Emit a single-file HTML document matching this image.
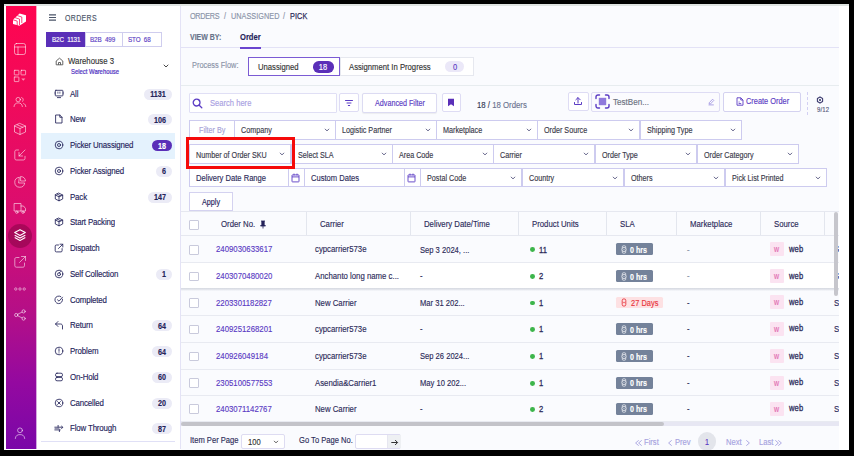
<!DOCTYPE html>
<html><head><meta charset="utf-8"><style>
html,body{margin:0;padding:0;}
body{width:854px;height:456px;overflow:hidden;background:#000;position:relative;font-family:"Liberation Sans", sans-serif;}
.t{position:absolute;white-space:nowrap;line-height:1;transform-origin:0 0;-webkit-text-stroke:0.15px currentColor;}
.r{position:absolute;box-sizing:border-box;}
.badge{border-radius:6px;font-size:7.6px;font-weight:700;text-align:center;line-height:11px;font-family:"Liberation Sans", sans-serif;}
</style></head><body>
<div class="r" style="left:4.00px;top:4.00px;width:845.00px;height:446.00px;background:#ffffff"></div>
<div class="r" style="left:4.00px;top:4.00px;width:845.00px;height:1.50px;background:#dfe4e2"></div>
<div class="r" style="left:6.00px;top:6.00px;width:30.00px;height:442.50px;background:linear-gradient(180deg,#ff0550 0%,#f20a5a 20%,#dc0d6e 45%,#b30f88 70%,#9409a0 85%,#7a07a8 100%)"></div>
<svg class="r" style="left:10.00px;top:10.00px" width="20" height="20" viewBox="0 0 20 20"><polygon points="3,9.8 9.6,3.4 16.0,5.3 16.0,11.6 9.3,15.8 3,13.9" fill="#fff"/><path d="M2.70 9.70 L7.20 11.10 L7.20 17.10" fill="none" stroke="#ff0552" stroke-width="0.75"/><path d="M5.00 7.65 L9.50 9.05 L9.50 15.05" fill="none" stroke="#ff0552" stroke-width="0.75"/><path d="M7.30 5.60 L11.80 7.00 L11.80 13.00" fill="none" stroke="#ff0552" stroke-width="0.75"/></svg>
<svg class="r" style="left:13.00px;top:42.00px" width="14" height="14" viewBox="0 0 14 14"><g fill="none" stroke="rgba(255,255,255,0.55)" stroke-width="1" stroke-linecap="round" stroke-linejoin="round"><rect x="1.5" y="1.5" width="11" height="11" rx="2"/><path d="M1.5 5 H12.5 M5 5 V12.5"/></g></svg>
<svg class="r" style="left:13.00px;top:68.50px" width="14" height="14" viewBox="0 0 14 14"><g fill="none" stroke="rgba(255,255,255,0.55)" stroke-width="1" stroke-linecap="round" stroke-linejoin="round"><rect x="1.3" y="1.3" width="4.6" height="4.6" rx="0.5"/><rect x="8" y="1.3" width="4.6" height="4.6" rx="0.5"/><rect x="1.3" y="8" width="4.6" height="4.6" rx="0.5"/></g><path d="M8.3 9.6 L12.3 9.6 L10.3 11.8 Z" fill="rgba(255,255,255,0.55)"/></svg>
<svg class="r" style="left:13.00px;top:95.00px" width="14" height="14" viewBox="0 0 14 14"><g fill="none" stroke="rgba(255,255,255,0.55)" stroke-width="1" stroke-linecap="round" stroke-linejoin="round"><circle cx="5.2" cy="4.6" r="2.2"/><path d="M1 11.6 C1.2 9 3 7.9 5.2 7.9 C7.4 7.9 9.2 9 9.4 11.6"/><path d="M8.6 2.5 C10.3 2.7 11 5.5 9.3 6.6 M10.6 8.4 C12 9 12.7 10.2 12.8 11.6"/></g></svg>
<svg class="r" style="left:13.00px;top:121.50px" width="14" height="14" viewBox="0 0 14 14"><g fill="none" stroke="rgba(255,255,255,0.55)" stroke-width="1" stroke-linecap="round" stroke-linejoin="round"><path d="M7 1.5 L12.5 4 L12.5 10 L7 12.5 L1.5 10 L1.5 4 Z M1.5 4 L7 6.5 L12.5 4 M7 6.5 V12.5 M4.2 2.8 L9.8 5.3"/></g></svg>
<svg class="r" style="left:13.00px;top:148.00px" width="14" height="14" viewBox="0 0 14 14"><g fill="none" stroke="rgba(255,255,255,0.55)" stroke-width="1" stroke-linecap="round" stroke-linejoin="round"><path d="M5.5 2 H3.5 C2.4 2 1.8 2.6 1.8 3.7 V10.3 C1.8 11.4 2.4 12 3.5 12 H10.3 C11.4 12 12 11.4 12 10.3 V8.3"/><path d="M12 2 L6 8 M6 4.5 V8 H9.5"/></g></svg>
<svg class="r" style="left:13.00px;top:174.50px" width="14" height="14" viewBox="0 0 14 14"><g fill="none" stroke="rgba(255,255,255,0.55)" stroke-width="1" stroke-linecap="round" stroke-linejoin="round"><path d="M6 2.3 A5 5 0 1 0 11.7 8 H6 Z"/><path d="M8 1.5 A5 5 0 0 1 12.5 6 H8 Z"/></g></svg>
<svg class="r" style="left:13.00px;top:201.00px" width="14" height="14" viewBox="0 0 14 14"><g fill="none" stroke="rgba(255,255,255,0.55)" stroke-width="1" stroke-linecap="round" stroke-linejoin="round"><path d="M1.5 2.5 H8 V10 H1.5 Z M8 5 H10.5 L12.5 7.5 V10 H8"/><circle cx="3.8" cy="11.2" r="1.2"/><circle cx="10" cy="11.2" r="1.2"/></g></svg>
<div class="r" style="left:8.40px;top:223.80px;width:23.80px;height:23.80px;background:rgba(105,0,50,0.4);border-radius:50%"></div>
<svg class="r" style="left:13.00px;top:227.80px" width="14" height="14" viewBox="0 0 14 14"><g fill="none" stroke="#fff" stroke-width="1.1" stroke-linejoin="round"><path d="M7 1.8 L12.3 4.6 L7 7.4 L1.7 4.6 Z"/><path d="M1.7 7.2 L7 10 L12.3 7.2"/><path d="M1.7 9.6 L7 12.4 L12.3 9.6"/></g></svg>
<svg class="r" style="left:13.00px;top:254.50px" width="14" height="14" viewBox="0 0 14 14"><g fill="none" stroke="rgba(255,255,255,0.55)" stroke-width="1" stroke-linecap="round" stroke-linejoin="round"><path d="M6 2.5 H3.5 C2.4 2.5 1.8 3.1 1.8 4.2 V10.5 C1.8 11.6 2.4 12.2 3.5 12.2 H9.8 C10.9 12.2 11.5 11.6 11.5 10.5 V8"/><path d="M6.5 7.5 L12.5 1.5 M8.5 1.5 H12.5 V5.5"/></g></svg>
<svg class="r" style="left:13.00px;top:282.10px" width="14" height="14" viewBox="0 0 14 14"><g fill="none" stroke="rgba(255,255,255,0.55)" stroke-width="0.9"><circle cx="2.8" cy="7" r="1.2"/><circle cx="7" cy="7" r="1.2"/><circle cx="11.2" cy="7" r="1.2"/></g></svg>
<svg class="r" style="left:13.00px;top:308.00px" width="14" height="14" viewBox="0 0 14 14"><g fill="none" stroke="rgba(255,255,255,0.55)" stroke-width="1" stroke-linecap="round" stroke-linejoin="round"><circle cx="3.2" cy="7" r="1.6"/><circle cx="10.6" cy="3.4" r="1.6"/><circle cx="10.6" cy="10.6" r="1.6"/><path d="M4.7 6.2 L9.1 4.1 M4.7 7.8 L9.1 9.9"/></g></svg>
<svg class="r" style="left:13.00px;top:426.00px" width="14" height="14" viewBox="0 0 14 14"><g fill="none" stroke="rgba(255,255,255,0.55)" stroke-width="1" stroke-linecap="round" stroke-linejoin="round"><circle cx="7" cy="4.3" r="2.4"/><path d="M2.3 12.5 C2.5 9.5 4.5 8.6 7 8.6 C9.5 8.6 11.5 9.5 11.7 12.5"/></g></svg>
<div class="r" style="left:36.00px;top:6.00px;width:144.00px;height:443.00px;background:#fff"></div>
<div class="r" style="left:36.00px;top:6.00px;width:1.00px;height:442.50px;opacity:0.35;background:linear-gradient(180deg,#ff0550 0%,#f20a5a 20%,#dc0d6e 45%,#b30f88 70%,#9409a0 85%,#7a07a8 100%)"></div>
<div class="r" style="left:179.60px;top:6.00px;width:1.00px;height:443.00px;background:#e4e3f6"></div>
<svg class="r" style="left:48.00px;top:13.00px" width="9" height="9" viewBox="0 0 9 9"><path d="M1 1.8 H8 M1 4.5 H8 M1 7.2 H8" stroke="#4b5468" stroke-width="1.2"/></svg>
<div class="t" style="left:64.60px;top:13.89px;font-size:8.40px;color:#4b5468;font-weight:400;letter-spacing:0.420px;transform:scaleX(0.8333);">ORDERS</div>
<div class="r" style="left:46.10px;top:32.20px;width:115.60px;height:14.50px;border:1px solid #cfcdee;background:#fff"></div>
<div class="r" style="left:46.10px;top:32.20px;width:38.90px;height:14.50px;background:#5a2fb8"></div>
<div class="r" style="left:122.00px;top:32.20px;width:0.80px;height:14.50px;background:#cfcdee"></div>
<div class="r" style="left:84.60px;top:32.20px;width:0.80px;height:14.50px;background:#cfcdee"></div>
<div class="t" style="left:51.70px;top:36.10px;font-size:7.56px;color:#fff;font-weight:400;letter-spacing:-0.120px;transform:scaleX(0.8333);">B2C&nbsp; 1131</div>
<div class="t" style="left:90.00px;top:36.10px;font-size:7.56px;color:#5b3cc4;font-weight:400;letter-spacing:-0.120px;transform:scaleX(0.8333);">B2B&nbsp; 499</div>
<div class="t" style="left:127.80px;top:36.10px;font-size:7.56px;color:#5b3cc4;font-weight:400;letter-spacing:-0.120px;transform:scaleX(0.8333);">STO&nbsp; 68</div>
<svg class="r" style="left:55.00px;top:57.00px" width="9" height="9" viewBox="0 0 9 9"><path d="M1.2 4 L4.5 1.2 L7.8 4 V7.8 H1.2 Z M3.5 7.8 V5.5 H5.5 V7.8" fill="none" stroke="#555" stroke-width="0.9" stroke-linejoin="round"/></svg>
<div class="t" style="left:68.20px;top:57.38px;font-size:9.36px;color:#333;font-weight:400;letter-spacing:0.000px;transform:scaleX(0.8333);">Warehouse 3</div>
<div class="t" style="left:71.10px;top:68.81px;font-size:7.08px;color:#4b2dbf;font-weight:400;letter-spacing:0.000px;transform:scaleX(0.8333);-webkit-text-stroke:0.2px #4b2dbf">Select Warehouse</div>
<svg class="r" style="left:162.40px;top:62.00px" width="8" height="8" viewBox="0 0 8 8"><path d="M2 3.0 L4 5.0 L6 3.0" fill="none" stroke="#333" stroke-width="0.9" stroke-linecap="round" stroke-linejoin="round"/></svg>
<svg class="r" style="left:53.70px;top:88.60px" width="10" height="10" viewBox="0 0 10 10"><g fill="none" stroke="#24235a" stroke-width="0.85" stroke-linecap="round" stroke-linejoin="round"><rect x="1.3" y="1.3" width="7.6" height="5.6" rx="0.6"/><path d="M3.4 8.6 H6.6"/><path d="M3.9 3 V4.3 M5.9 3 V4.3" stroke-width="0.7"/><path d="M0.9 3.2 V5 M9.3 3.2 V5" stroke-width="0.5"/></g></svg>
<div class="t" style="left:70.30px;top:88.58px;font-size:9.48px;color:#24235a;font-weight:400;letter-spacing:-0.180px;transform:scaleX(0.8333);">All</div>
<div class="r" style="left:143.70px;top:88.50px;width:28.20px;height:11.00px;background:#ebebf6;border-radius:5.50px"></div>
<div class="t" style="left:117.80px;width:80px;text-align:center;top:90.08px;font-size:8.64px;color:#24235a;font-weight:700;transform:scaleX(0.8333);transform-origin:50% 0">1131</div>
<svg class="r" style="left:53.70px;top:114.36px" width="10" height="10" viewBox="0 0 10 10"><g fill="none" stroke="#24235a" stroke-width="0.85" stroke-linecap="round" stroke-linejoin="round"><path d="M2 1 H5.8 L8 3.3 V9 H2 Z M5.8 1 V3.3 H8"/></g></svg>
<div class="t" style="left:70.30px;top:114.33px;font-size:9.48px;color:#24235a;font-weight:400;letter-spacing:-0.180px;transform:scaleX(0.8333);">New</div>
<div class="r" style="left:147.90px;top:114.26px;width:24.00px;height:11.00px;background:#ebebf6;border-radius:5.50px"></div>
<div class="t" style="left:119.90px;width:80px;text-align:center;top:115.84px;font-size:8.64px;color:#24235a;font-weight:700;transform:scaleX(0.8333);transform-origin:50% 0">106</div>
<div class="r" style="left:40.90px;top:132.92px;width:134.30px;height:25.60px;background:#e4f2fd"></div>
<svg class="r" style="left:53.70px;top:140.12px" width="10" height="10" viewBox="0 0 10 10"><g fill="none" stroke="#24235a" stroke-width="0.85" stroke-linecap="round" stroke-linejoin="round"><circle cx="5" cy="5" r="3.8"/><circle cx="5" cy="5" r="1.5"/></g></svg>
<div class="t" style="left:70.30px;top:140.09px;font-size:9.48px;color:#24235a;font-weight:400;letter-spacing:-0.180px;transform:scaleX(0.8333);">Picker Unassigned</div>
<div class="r" style="left:151.90px;top:140.02px;width:20.00px;height:11.00px;background:#5a2fb8;border-radius:5.50px"></div>
<div class="t" style="left:121.90px;width:80px;text-align:center;top:141.60px;font-size:8.64px;color:#fff;font-weight:700;transform:scaleX(0.8333);transform-origin:50% 0">18</div>
<svg class="r" style="left:53.70px;top:165.87px" width="10" height="10" viewBox="0 0 10 10"><g fill="none" stroke="#24235a" stroke-width="0.85" stroke-linecap="round" stroke-linejoin="round"><circle cx="5" cy="5" r="3.8"/><circle cx="5" cy="5" r="1.5"/></g></svg>
<div class="t" style="left:70.30px;top:165.85px;font-size:9.48px;color:#24235a;font-weight:400;letter-spacing:-0.180px;transform:scaleX(0.8333);">Picker Assigned</div>
<div class="r" style="left:156.40px;top:165.77px;width:15.50px;height:11.00px;background:#ebebf6;border-radius:5.50px"></div>
<div class="t" style="left:124.15px;width:80px;text-align:center;top:167.36px;font-size:8.64px;color:#24235a;font-weight:700;transform:scaleX(0.8333);transform-origin:50% 0">6</div>
<svg class="r" style="left:53.70px;top:191.63px" width="10" height="10" viewBox="0 0 10 10"><g fill="none" stroke="#24235a" stroke-width="0.85" stroke-linecap="round" stroke-linejoin="round"><path d="M5 1.2 L8.7 3 V7 L5 8.8 L1.3 7 V3 Z M1.3 3 L5 4.8 L8.7 3 M5 4.8 V8.8 M3.2 2.1 L6.8 3.9"/></g></svg>
<div class="t" style="left:70.30px;top:191.61px;font-size:9.48px;color:#24235a;font-weight:400;letter-spacing:-0.180px;transform:scaleX(0.8333);">Pack</div>
<div class="r" style="left:147.90px;top:191.53px;width:24.00px;height:11.00px;background:#ebebf6;border-radius:5.50px"></div>
<div class="t" style="left:119.90px;width:80px;text-align:center;top:193.11px;font-size:8.64px;color:#24235a;font-weight:700;transform:scaleX(0.8333);transform-origin:50% 0">147</div>
<svg class="r" style="left:53.70px;top:217.39px" width="10" height="10" viewBox="0 0 10 10"><g fill="none" stroke="#24235a" stroke-width="0.85" stroke-linecap="round" stroke-linejoin="round"><path d="M5 1.2 L8.7 3 V7 L5 8.8 L1.3 7 V3 Z M1.3 3 L5 4.8 L8.7 3 M5 4.8 V8.8 M3.2 2.1 L6.8 3.9"/></g></svg>
<div class="t" style="left:70.30px;top:217.36px;font-size:9.48px;color:#24235a;font-weight:400;letter-spacing:-0.180px;transform:scaleX(0.8333);">Start Packing</div>
<svg class="r" style="left:53.70px;top:243.15px" width="10" height="10" viewBox="0 0 10 10"><g fill="none" stroke="#24235a" stroke-width="0.85" stroke-linecap="round" stroke-linejoin="round"><path d="M4.5 2 H2.3 C1.6 2 1.2 2.4 1.2 3.1 V7.8 C1.2 8.5 1.6 8.9 2.3 8.9 H7 C7.7 8.9 8.1 8.5 8.1 7.8 V5.6"/><path d="M4.5 5.5 L8.8 1.2 M6 1.2 H8.8 V4"/></g></svg>
<div class="t" style="left:70.30px;top:243.12px;font-size:9.48px;color:#24235a;font-weight:400;letter-spacing:-0.180px;transform:scaleX(0.8333);">Dispatch</div>
<svg class="r" style="left:53.70px;top:268.90px" width="10" height="10" viewBox="0 0 10 10"><g fill="none" stroke="#24235a" stroke-width="0.85" stroke-linecap="round" stroke-linejoin="round"><circle cx="5" cy="5" r="3.8"/><circle cx="5" cy="5.3" r="1.5"/><path d="M5.2 3.8 L6.6 2.6"/></g></svg>
<div class="t" style="left:70.30px;top:268.88px;font-size:9.48px;color:#24235a;font-weight:400;letter-spacing:-0.180px;transform:scaleX(0.8333);">Self Collection</div>
<div class="r" style="left:156.40px;top:268.80px;width:15.50px;height:11.00px;background:#ebebf6;border-radius:5.50px"></div>
<div class="t" style="left:124.15px;width:80px;text-align:center;top:270.39px;font-size:8.64px;color:#24235a;font-weight:700;transform:scaleX(0.8333);transform-origin:50% 0">1</div>
<svg class="r" style="left:53.70px;top:294.66px" width="10" height="10" viewBox="0 0 10 10"><g fill="none" stroke="#24235a" stroke-width="0.85" stroke-linecap="round" stroke-linejoin="round"><path d="M8.5 4.2 A3.8 3.8 0 1 1 6.8 1.6"/><path d="M3.5 4.8 L5 6.2 L8.5 2.2"/></g></svg>
<div class="t" style="left:70.30px;top:294.64px;font-size:9.48px;color:#24235a;font-weight:400;letter-spacing:-0.180px;transform:scaleX(0.8333);">Completed</div>
<svg class="r" style="left:53.70px;top:320.42px" width="10" height="10" viewBox="0 0 10 10"><g fill="none" stroke="#24235a" stroke-width="0.85" stroke-linecap="round" stroke-linejoin="round"><path d="M4 1.5 L1.5 4 L4 6.5 M1.5 4 H6.5 C7.8 4 8.5 4.8 8.5 6 V9"/></g></svg>
<div class="t" style="left:70.30px;top:320.39px;font-size:9.48px;color:#24235a;font-weight:400;letter-spacing:-0.180px;transform:scaleX(0.8333);">Return</div>
<div class="r" style="left:151.90px;top:320.32px;width:20.00px;height:11.00px;background:#ebebf6;border-radius:5.50px"></div>
<div class="t" style="left:121.90px;width:80px;text-align:center;top:321.90px;font-size:8.64px;color:#24235a;font-weight:700;transform:scaleX(0.8333);transform-origin:50% 0">64</div>
<svg class="r" style="left:53.70px;top:346.18px" width="10" height="10" viewBox="0 0 10 10"><g fill="none" stroke="#24235a" stroke-width="0.85" stroke-linecap="round" stroke-linejoin="round"><circle cx="5" cy="5" r="3.8"/><path d="M5 2.8 V5.3 M5 6.8 V7"/></g></svg>
<div class="t" style="left:70.30px;top:346.15px;font-size:9.48px;color:#24235a;font-weight:400;letter-spacing:-0.180px;transform:scaleX(0.8333);">Problem</div>
<div class="r" style="left:151.90px;top:346.08px;width:20.00px;height:11.00px;background:#ebebf6;border-radius:5.50px"></div>
<div class="t" style="left:121.90px;width:80px;text-align:center;top:347.66px;font-size:8.64px;color:#24235a;font-weight:700;transform:scaleX(0.8333);transform-origin:50% 0">64</div>
<svg class="r" style="left:53.70px;top:371.93px" width="10" height="10" viewBox="0 0 10 10"><g fill="none" stroke="#24235a" stroke-width="0.85" stroke-linecap="round" stroke-linejoin="round"><rect x="1.5" y="1.2" width="7" height="3.4" rx="1.5"/><rect x="1.5" y="5.4" width="7" height="3.4" rx="1.5"/></g></svg>
<div class="t" style="left:70.30px;top:371.91px;font-size:9.48px;color:#24235a;font-weight:400;letter-spacing:-0.180px;transform:scaleX(0.8333);">On-Hold</div>
<div class="r" style="left:151.90px;top:371.83px;width:20.00px;height:11.00px;background:#ebebf6;border-radius:5.50px"></div>
<div class="t" style="left:121.90px;width:80px;text-align:center;top:373.42px;font-size:8.64px;color:#24235a;font-weight:700;transform:scaleX(0.8333);transform-origin:50% 0">60</div>
<svg class="r" style="left:53.70px;top:397.69px" width="10" height="10" viewBox="0 0 10 10"><g fill="none" stroke="#24235a" stroke-width="0.85" stroke-linecap="round" stroke-linejoin="round"><circle cx="5" cy="5" r="3.8"/><path d="M3.6 3.6 L6.4 6.4 M6.4 3.6 L3.6 6.4"/></g></svg>
<div class="t" style="left:70.30px;top:397.67px;font-size:9.48px;color:#24235a;font-weight:400;letter-spacing:-0.180px;transform:scaleX(0.8333);">Cancelled</div>
<div class="r" style="left:151.90px;top:397.59px;width:20.00px;height:11.00px;background:#ebebf6;border-radius:5.50px"></div>
<div class="t" style="left:121.90px;width:80px;text-align:center;top:399.17px;font-size:8.64px;color:#24235a;font-weight:700;transform:scaleX(0.8333);transform-origin:50% 0">20</div>
<svg class="r" style="left:53.70px;top:423.45px" width="10" height="10" viewBox="0 0 10 10"><g fill="none" stroke="#24235a" stroke-width="0.85" stroke-linecap="round" stroke-linejoin="round"><path d="M0.8 4.2 H8.6 M0.8 6.9 H6.2 M4.1 2.4 V4.2 M5.4 6.9 V8.6 M7.6 3.2 L8.8 4.4 L7.6 5.6"/><path d="M1 5.5 H5" stroke-width="0.5"/></g></svg>
<div class="t" style="left:70.30px;top:423.43px;font-size:9.48px;color:#24235a;font-weight:400;letter-spacing:-0.180px;transform:scaleX(0.8333);">Flow Through</div>
<div class="r" style="left:151.90px;top:423.35px;width:20.00px;height:11.00px;background:#ebebf6;border-radius:5.50px"></div>
<div class="t" style="left:121.90px;width:80px;text-align:center;top:424.93px;font-size:8.64px;color:#24235a;font-weight:700;transform:scaleX(0.8333);transform-origin:50% 0">87</div>
<div class="r" style="left:41.00px;top:440.70px;width:133.70px;height:1.00px;background:#e0e0f6"></div>
<div class="r" style="left:180.60px;top:6.00px;width:658.40px;height:443.50px;background:#fafbfe"></div>
<div class="t" style="left:189.80px;top:12.18px;font-size:8.76px;color:#8a93a8;font-weight:400;letter-spacing:-0.360px;transform:scaleX(0.8333);">ORDERS</div>
<div class="t" style="left:223.90px;top:12.18px;font-size:8.76px;color:#8a93a8;font-weight:400;letter-spacing:0.000px;transform:scaleX(0.8333);">/</div>
<div class="t" style="left:230.80px;top:12.18px;font-size:8.76px;color:#8a93a8;font-weight:400;letter-spacing:0.024px;transform:scaleX(0.8333);">UNASSIGNED</div>
<div class="t" style="left:282.90px;top:12.18px;font-size:8.76px;color:#8a93a8;font-weight:400;letter-spacing:0.000px;transform:scaleX(0.8333);">/</div>
<div class="t" style="left:289.90px;top:12.18px;font-size:8.76px;color:#2e2d5c;font-weight:400;letter-spacing:0.120px;transform:scaleX(0.8333);-webkit-text-stroke:0.25px #2e2d5c">PICK</div>
<div class="t" style="left:189.60px;top:33.39px;font-size:8.40px;color:#67738a;font-weight:700;letter-spacing:0.000px;transform:scaleX(0.8333);">VIEW BY:</div>
<div class="t" style="left:240.00px;top:32.58px;font-size:9.12px;color:#24235a;font-weight:700;letter-spacing:0.000px;transform:scaleX(0.8333);">Order</div>
<div class="r" style="left:180.60px;top:47.00px;width:658.40px;height:1.00px;background:#e3e2f6"></div>
<div class="r" style="left:239.70px;top:46.80px;width:21.30px;height:1.80px;background:#6a45cf"></div>
<div class="t" style="left:192.20px;top:60.88px;font-size:8.88px;color:#8a93a8;font-weight:400;letter-spacing:0.000px;transform:scaleX(0.8333);">Process Flow:</div>
<div class="r" style="left:339.70px;top:57.20px;width:133.90px;height:18.40px;background:#fff;border:1px solid #e6e8ef;box-sizing:border-box"></div>
<div class="r" style="left:248.00px;top:57.00px;width:91.70px;height:18.70px;background:#fff;border:1px solid #7b5bd4;box-sizing:border-box"></div>
<div class="t" style="left:258.30px;top:62.88px;font-size:9.24px;color:#333;font-weight:400;letter-spacing:0.000px;transform:scaleX(0.8333);">Unassigned</div>
<div class="r" style="left:312.80px;top:61.00px;width:21.30px;height:11.50px;background:#5a2fb8;border-radius:5.75px"></div>
<div class="t" style="left:283.45px;width:80px;text-align:center;top:63.16px;font-size:9.00px;color:#fff;font-weight:400;transform:scaleX(0.8333);transform-origin:50% 0">18</div>
<div class="t" style="left:349.00px;top:62.88px;font-size:9.24px;color:#333;font-weight:400;letter-spacing:0.000px;transform:scaleX(0.8333);">Assignment In Progress</div>
<div class="r" style="left:445.10px;top:61.00px;width:19.10px;height:11.00px;background:#ebe8f8;border-radius:5.50px"></div>
<div class="t" style="left:414.65px;width:80px;text-align:center;top:62.91px;font-size:9.00px;color:#5b3cc4;font-weight:400;transform:scaleX(0.8333);transform-origin:50% 0">0</div>
<div class="r" style="left:180.60px;top:85.00px;width:658.40px;height:1.00px;background:#e7ecef"></div>
<div class="r" style="left:189.10px;top:93.30px;width:147.50px;height:19.30px;background:#fff;border:1px solid #e0dff5;border-radius:1px"></div>
<svg class="r" style="left:192.00px;top:98.00px" width="11" height="11" viewBox="0 0 11 11"><circle cx="4.6" cy="4.6" r="3.4" fill="none" stroke="#5b3cc4" stroke-width="1.3"/><path d="M7.2 7.2 L9.8 9.8" stroke="#5b3cc4" stroke-width="1.3" stroke-linecap="round"/></svg>
<div class="t" style="left:209.50px;top:98.98px;font-size:9.12px;color:#a9a0e2;font-weight:400;letter-spacing:0.000px;transform:scaleX(0.8333);">Search here</div>
<div class="r" style="left:339.20px;top:93.30px;width:20.10px;height:19.10px;background:#fff;border:1px solid #dedcf4;border-radius:2px"></div>
<svg class="r" style="left:344.00px;top:98.00px" width="10" height="10" viewBox="0 0 10 10"><path d="M1.5 2.5 H8.5 M3 5 H7 M4.3 7.5 H5.7" stroke="#5b3cc4" stroke-width="1" stroke-linecap="round"/></svg>
<div class="r" style="left:362.40px;top:93.30px;width:74.90px;height:19.50px;background:#fff;border:1px solid #dcdbf2;border-radius:2px;box-shadow:0 0.5px 1px rgba(0,0,0,0.06)"></div>
<div class="t" style="left:375.00px;top:98.99px;font-size:8.64px;color:#5b3cc4;font-weight:400;letter-spacing:0.000px;transform:scaleX(0.8333);">Advanced Filter</div>
<div class="r" style="left:442.40px;top:93.30px;width:18.20px;height:19.10px;background:#fff;border:1px solid #dedcf4;border-radius:2px"></div>
<svg class="r" style="left:446.80px;top:98.00px" width="8" height="9" viewBox="0 0 8 9"><path d="M1 0.7 H7 V8.3 L4 6.2 L1 8.3 Z" fill="#5a2fb8"/></svg>
<div class="t" style="left:476.60px;top:100.58px;font-size:9.36px;color:#6b7390;font-weight:400;letter-spacing:0.000px;transform:scaleX(0.8333);"><span style="color:#333a55">18 /</span> 18 Orders</div>
<div class="r" style="left:567.50px;top:91.90px;width:21.00px;height:18.70px;background:#fff;border:1px solid #dedcf4;border-radius:2px"></div>
<svg class="r" style="left:573.00px;top:95.50px" width="10" height="10" viewBox="0 0 10 10"><path d="M5 7 V1.8 M2.8 3.8 L5 1.6 L7.2 3.8 M1.5 6.5 V8.5 H8.5 V6.5" fill="none" stroke="#5b3cc4" stroke-width="1" stroke-linecap="round" stroke-linejoin="round"/></svg>
<div class="r" style="left:591.20px;top:91.90px;width:128.60px;height:19.70px;background:#fbfbfe;border:1px solid #dedcf4;border-radius:2px"></div>
<svg class="r" style="left:595.00px;top:94.30px" width="15" height="15" viewBox="0 0 15 15"><g fill="none" stroke="#5b3cc4" stroke-width="1.4" stroke-linecap="round"><path d="M1 4.5 V3 C1 1.8 1.8 1 3 1 H4.5 M10.5 1 H12 C13.2 1 14 1.8 14 3 V4.5 M14 10.5 V12 C14 13.2 13.2 14 12 14 H10.5 M4.5 14 H3 C1.8 14 1 13.2 1 12 V10.5"/></g><rect x="3.8" y="3.8" width="7.4" height="7.4" fill="#8f78dc"/></svg>
<div class="t" style="left:613.40px;top:96.97px;font-size:9.72px;color:#6b7280;font-weight:400;letter-spacing:0.000px;transform:scaleX(0.8333);">TestBen...</div>
<svg class="r" style="left:707.00px;top:96.50px" width="8" height="9" viewBox="0 0 8 9"><path d="M2.2 5.8 L5.6 2.2 L6.8 3.4 L3.4 7 H2.2 Z M1.5 7.9 H6.8" fill="none" stroke="#9a8fe0" stroke-width="0.8"/></svg>
<div class="r" style="left:723.30px;top:91.70px;width:77.40px;height:19.90px;background:#fff;border:1px solid #d4d2f0;border-radius:2px"></div>
<svg class="r" style="left:735.80px;top:96.80px" width="8" height="9" viewBox="0 0 8 9"><path d="M1 0.8 H4.8 L7 3 V8.2 H1 Z M4.8 0.8 V3 H7 M2.6 5 H3.6 M2.6 6.6 H5.2" fill="none" stroke="#5b3cc4" stroke-width="0.9" stroke-linejoin="round"/></svg>
<div class="t" style="left:745.70px;top:97.48px;font-size:8.88px;color:#5b3cc4;font-weight:400;letter-spacing:0.000px;transform:scaleX(0.8333);">Create Order</div>
<div class="r" style="left:807px;top:92px;width:0;height:22.6px;border-left:1px dashed #d3d0f3"></div>
<svg class="r" style="left:816.20px;top:95.50px" width="8" height="8" viewBox="0 0 8 8"><path d="M4 0.9 L6.6 2.4 L6.6 5.6 L4 7.1 L1.4 5.6 L1.4 2.4 Z" fill="none" stroke="#3d3c70" stroke-width="1.1" stroke-linejoin="round"/><circle cx="4" cy="4" r="1.1" fill="#3d3c70"/></svg>
<div class="t" style="left:816.70px;top:105.51px;font-size:7.20px;color:#55557a;font-weight:400;letter-spacing:0.180px;transform:scaleX(0.8333);">9/12</div>
<div class="r" style="left:189.00px;top:120.00px;width:46.00px;height:20.00px;background:#fff;border:1px solid #cdcbef;box-sizing:border-box"></div>
<div class="r" style="left:234.00px;top:120.00px;width:102.00px;height:20.00px;background:#fff;border:1px solid #cdcbef;box-sizing:border-box"></div>
<div class="r" style="left:335.00px;top:120.00px;width:102.00px;height:20.00px;background:#fff;border:1px solid #cdcbef;box-sizing:border-box"></div>
<div class="r" style="left:436.00px;top:120.00px;width:102.00px;height:20.00px;background:#fff;border:1px solid #cdcbef;box-sizing:border-box"></div>
<div class="r" style="left:537.00px;top:120.00px;width:103.00px;height:20.00px;background:#fff;border:1px solid #cdcbef;box-sizing:border-box"></div>
<div class="r" style="left:640.00px;top:120.00px;width:102.00px;height:20.00px;background:#fff;border:1px solid #cdcbef;box-sizing:border-box"></div>
<div class="r" style="left:189.00px;top:144.00px;width:102.00px;height:20.00px;background:#fff;border:1px solid #cdcbef;box-sizing:border-box"></div>
<div class="r" style="left:291.00px;top:144.00px;width:102.00px;height:20.00px;background:#fff;border:1px solid #cdcbef;box-sizing:border-box"></div>
<div class="r" style="left:392.00px;top:144.00px;width:102.00px;height:20.00px;background:#fff;border:1px solid #cdcbef;box-sizing:border-box"></div>
<div class="r" style="left:493.00px;top:144.00px;width:102.00px;height:20.00px;background:#fff;border:1px solid #cdcbef;box-sizing:border-box"></div>
<div class="r" style="left:595.00px;top:144.00px;width:102.00px;height:20.00px;background:#fff;border:1px solid #cdcbef;box-sizing:border-box"></div>
<div class="r" style="left:697.00px;top:144.00px;width:102.00px;height:20.00px;background:#fff;border:1px solid #cdcbef;box-sizing:border-box"></div>
<div class="r" style="left:189.00px;top:168.00px;width:116.00px;height:19.00px;background:#fff;border:1px solid #cdcbef;box-sizing:border-box"></div>
<div class="r" style="left:304.00px;top:168.00px;width:117.00px;height:19.00px;background:#fff;border:1px solid #cdcbef;box-sizing:border-box"></div>
<div class="r" style="left:420.00px;top:168.00px;width:102.00px;height:19.00px;background:#fff;border:1px solid #cdcbef;box-sizing:border-box"></div>
<div class="r" style="left:522.00px;top:168.00px;width:102.00px;height:19.00px;background:#fff;border:1px solid #cdcbef;box-sizing:border-box"></div>
<div class="r" style="left:624.00px;top:168.00px;width:101.00px;height:19.00px;background:#fff;border:1px solid #cdcbef;box-sizing:border-box"></div>
<div class="r" style="left:725.00px;top:168.00px;width:102.00px;height:19.00px;background:#fff;border:1px solid #cdcbef;box-sizing:border-box"></div>
<div class="t" style="left:198.60px;top:126.19px;font-size:8.64px;color:#a7a3d8;font-weight:400;letter-spacing:0.000px;transform:scaleX(0.8333);">Filter By</div>
<div class="t" style="left:240.50px;top:126.19px;font-size:8.64px;color:#3a3a4a;font-weight:400;letter-spacing:0.000px;transform:scaleX(0.8333);">Company</div>
<svg class="r" style="left:323.00px;top:126.30px" width="8" height="8" viewBox="0 0 8 8"><path d="M2.2 3.1 L4 4.9 L5.8 3.1" fill="none" stroke="#3a3a6a" stroke-width="0.8" stroke-linecap="round" stroke-linejoin="round"/></svg>
<div class="t" style="left:341.50px;top:126.19px;font-size:8.64px;color:#3a3a4a;font-weight:400;letter-spacing:0.000px;transform:scaleX(0.8333);">Logistic Partner</div>
<svg class="r" style="left:424.00px;top:126.30px" width="8" height="8" viewBox="0 0 8 8"><path d="M2.2 3.1 L4 4.9 L5.8 3.1" fill="none" stroke="#3a3a6a" stroke-width="0.8" stroke-linecap="round" stroke-linejoin="round"/></svg>
<div class="t" style="left:442.50px;top:126.19px;font-size:8.64px;color:#3a3a4a;font-weight:400;letter-spacing:0.000px;transform:scaleX(0.8333);">Marketplace</div>
<svg class="r" style="left:525.00px;top:126.30px" width="8" height="8" viewBox="0 0 8 8"><path d="M2.2 3.1 L4 4.9 L5.8 3.1" fill="none" stroke="#3a3a6a" stroke-width="0.8" stroke-linecap="round" stroke-linejoin="round"/></svg>
<div class="t" style="left:543.50px;top:126.19px;font-size:8.64px;color:#3a3a4a;font-weight:400;letter-spacing:0.000px;transform:scaleX(0.8333);">Order Source</div>
<svg class="r" style="left:627.00px;top:126.30px" width="8" height="8" viewBox="0 0 8 8"><path d="M2.2 3.1 L4 4.9 L5.8 3.1" fill="none" stroke="#3a3a6a" stroke-width="0.8" stroke-linecap="round" stroke-linejoin="round"/></svg>
<div class="t" style="left:646.50px;top:126.19px;font-size:8.64px;color:#3a3a4a;font-weight:400;letter-spacing:0.000px;transform:scaleX(0.8333);">Shipping Type</div>
<svg class="r" style="left:729.00px;top:126.30px" width="8" height="8" viewBox="0 0 8 8"><path d="M2.2 3.1 L4 4.9 L5.8 3.1" fill="none" stroke="#3a3a6a" stroke-width="0.8" stroke-linecap="round" stroke-linejoin="round"/></svg>
<div class="t" style="left:195.50px;top:150.59px;font-size:8.64px;color:#3a3a4a;font-weight:400;letter-spacing:0.000px;transform:scaleX(0.8333);">Number of Order SKU</div>
<svg class="r" style="left:278.00px;top:150.30px" width="8" height="8" viewBox="0 0 8 8"><path d="M2.2 3.1 L4 4.9 L5.8 3.1" fill="none" stroke="#3a3a6a" stroke-width="0.8" stroke-linecap="round" stroke-linejoin="round"/></svg>
<div class="t" style="left:297.50px;top:150.59px;font-size:8.64px;color:#3a3a4a;font-weight:400;letter-spacing:0.000px;transform:scaleX(0.8333);">Select SLA</div>
<svg class="r" style="left:380.00px;top:150.30px" width="8" height="8" viewBox="0 0 8 8"><path d="M2.2 3.1 L4 4.9 L5.8 3.1" fill="none" stroke="#3a3a6a" stroke-width="0.8" stroke-linecap="round" stroke-linejoin="round"/></svg>
<div class="t" style="left:398.50px;top:150.59px;font-size:8.64px;color:#3a3a4a;font-weight:400;letter-spacing:0.000px;transform:scaleX(0.8333);">Area Code</div>
<svg class="r" style="left:481.00px;top:150.30px" width="8" height="8" viewBox="0 0 8 8"><path d="M2.2 3.1 L4 4.9 L5.8 3.1" fill="none" stroke="#3a3a6a" stroke-width="0.8" stroke-linecap="round" stroke-linejoin="round"/></svg>
<div class="t" style="left:499.50px;top:150.59px;font-size:8.64px;color:#3a3a4a;font-weight:400;letter-spacing:0.000px;transform:scaleX(0.8333);">Carrier</div>
<svg class="r" style="left:582.00px;top:150.30px" width="8" height="8" viewBox="0 0 8 8"><path d="M2.2 3.1 L4 4.9 L5.8 3.1" fill="none" stroke="#3a3a6a" stroke-width="0.8" stroke-linecap="round" stroke-linejoin="round"/></svg>
<div class="t" style="left:601.50px;top:150.59px;font-size:8.64px;color:#3a3a4a;font-weight:400;letter-spacing:0.000px;transform:scaleX(0.8333);">Order Type</div>
<svg class="r" style="left:684.00px;top:150.30px" width="8" height="8" viewBox="0 0 8 8"><path d="M2.2 3.1 L4 4.9 L5.8 3.1" fill="none" stroke="#3a3a6a" stroke-width="0.8" stroke-linecap="round" stroke-linejoin="round"/></svg>
<div class="t" style="left:703.50px;top:150.59px;font-size:8.64px;color:#3a3a4a;font-weight:400;letter-spacing:0.000px;transform:scaleX(0.8333);">Order Category</div>
<svg class="r" style="left:786.00px;top:150.30px" width="8" height="8" viewBox="0 0 8 8"><path d="M2.2 3.1 L4 4.9 L5.8 3.1" fill="none" stroke="#3a3a6a" stroke-width="0.8" stroke-linecap="round" stroke-linejoin="round"/></svg>
<div class="r" style="left:288.00px;top:168.00px;width:1.00px;height:19.00px;background:#cdcbef"></div>
<div class="t" style="left:195.90px;top:173.78px;font-size:9.12px;color:#2d2c5a;font-weight:400;letter-spacing:0.000px;transform:scaleX(0.8333);">Delivery Date Range</div>
<svg class="r" style="left:290.50px;top:172.70px" width="9" height="10" viewBox="0 0 9 10"><g fill="none" stroke="#5b3cc4" stroke-width="0.9"><rect x="1" y="1.9" width="7" height="7" rx="0.5"/><path d="M1 3.9 H8 M3 0.6 V2.4 M6 0.6 V2.4"/></g></svg>
<div class="r" style="left:404.00px;top:168.00px;width:1.00px;height:19.00px;background:#cdcbef"></div>
<div class="t" style="left:310.90px;top:173.78px;font-size:9.12px;color:#2d2c5a;font-weight:400;letter-spacing:0.000px;transform:scaleX(0.8333);">Custom Dates</div>
<svg class="r" style="left:406.50px;top:172.70px" width="9" height="10" viewBox="0 0 9 10"><g fill="none" stroke="#5b3cc4" stroke-width="0.9"><rect x="1" y="1.9" width="7" height="7" rx="0.5"/><path d="M1 3.9 H8 M3 0.6 V2.4 M6 0.6 V2.4"/></g></svg>
<div class="t" style="left:426.50px;top:174.19px;font-size:8.64px;color:#3a3a4a;font-weight:400;letter-spacing:0.000px;transform:scaleX(0.8333);">Postal Code</div>
<svg class="r" style="left:509.00px;top:173.80px" width="8" height="8" viewBox="0 0 8 8"><path d="M2.2 3.1 L4 4.9 L5.8 3.1" fill="none" stroke="#3a3a6a" stroke-width="0.8" stroke-linecap="round" stroke-linejoin="round"/></svg>
<div class="t" style="left:528.50px;top:174.19px;font-size:8.64px;color:#3a3a4a;font-weight:400;letter-spacing:0.000px;transform:scaleX(0.8333);">Country</div>
<svg class="r" style="left:611.00px;top:173.80px" width="8" height="8" viewBox="0 0 8 8"><path d="M2.2 3.1 L4 4.9 L5.8 3.1" fill="none" stroke="#3a3a6a" stroke-width="0.8" stroke-linecap="round" stroke-linejoin="round"/></svg>
<div class="t" style="left:630.50px;top:174.19px;font-size:8.64px;color:#3a3a4a;font-weight:400;letter-spacing:0.000px;transform:scaleX(0.8333);">Others</div>
<svg class="r" style="left:712.00px;top:173.80px" width="8" height="8" viewBox="0 0 8 8"><path d="M2.2 3.1 L4 4.9 L5.8 3.1" fill="none" stroke="#3a3a6a" stroke-width="0.8" stroke-linecap="round" stroke-linejoin="round"/></svg>
<div class="t" style="left:731.50px;top:174.19px;font-size:8.64px;color:#3a3a4a;font-weight:400;letter-spacing:0.000px;transform:scaleX(0.8333);">Pick List Printed</div>
<svg class="r" style="left:814.00px;top:173.80px" width="8" height="8" viewBox="0 0 8 8"><path d="M2.2 3.1 L4 4.9 L5.8 3.1" fill="none" stroke="#3a3a6a" stroke-width="0.8" stroke-linecap="round" stroke-linejoin="round"/></svg>
<div class="r" style="left:186.00px;top:137.00px;width:109.00px;height:32.00px;border:3px solid #f50a0a;box-sizing:border-box"></div>
<div class="r" style="left:189.00px;top:192.00px;width:43.80px;height:18.90px;background:#fff;border:1px solid #d4d2f0;box-sizing:border-box"></div>
<div class="t" style="left:201.90px;top:198.09px;font-size:8.64px;color:#24235a;font-weight:400;letter-spacing:0.000px;transform:scaleX(0.8333);">Apply</div>
<div class="r" style="left:180.60px;top:210.90px;width:658.40px;height:25.10px;background:#fafbfe;border-top:1px solid #e6e8f0"></div>
<div class="r" style="left:306.00px;top:212.00px;width:1.00px;height:23.00px;background:#e3e6ee"></div>
<div class="r" style="left:410.00px;top:212.00px;width:1.00px;height:23.00px;background:#e3e6ee"></div>
<div class="r" style="left:518.00px;top:212.00px;width:1.00px;height:23.00px;background:#e3e6ee"></div>
<div class="r" style="left:606.00px;top:212.00px;width:1.00px;height:23.00px;background:#e3e6ee"></div>
<div class="r" style="left:676.00px;top:212.00px;width:1.00px;height:23.00px;background:#e3e6ee"></div>
<div class="r" style="left:760.00px;top:212.00px;width:1.00px;height:23.00px;background:#e3e6ee"></div>
<div class="r" style="left:824.00px;top:212.00px;width:1.00px;height:23.00px;background:#e3e6ee"></div>
<div class="r" style="left:189px;top:220.2px;width:9.7px;height:9.7px;border:1px solid #c9cadc;box-sizing:border-box;border-radius:1px;background:#fff"></div>
<div class="t" style="left:220.60px;top:219.78px;font-size:9.36px;color:#2d2c5a;font-weight:400;letter-spacing:0.000px;transform:scaleX(0.8333);">Order No.</div>
<svg class="r" style="left:258.50px;top:219.50px" width="8" height="9" viewBox="0 0 8 9"><path d="M2 1 H6 M2.8 1 V4.5 L1.5 6 H6.5 L5.2 4.5 V1 M4 6 V8.5" fill="#24235a" stroke="#24235a" stroke-width="0.8"/></svg>
<div class="t" style="left:320.20px;top:219.78px;font-size:9.36px;color:#2d2c5a;font-weight:400;letter-spacing:0.000px;transform:scaleX(0.8333);">Carrier</div>
<div class="t" style="left:424.40px;top:219.78px;font-size:9.36px;color:#2d2c5a;font-weight:400;letter-spacing:0.000px;transform:scaleX(0.8333);">Delivery Date/Time</div>
<div class="t" style="left:532.00px;top:219.78px;font-size:9.36px;color:#2d2c5a;font-weight:400;letter-spacing:0.000px;transform:scaleX(0.8333);">Product Units</div>
<div class="t" style="left:620.20px;top:219.78px;font-size:9.36px;color:#2d2c5a;font-weight:400;letter-spacing:0.000px;transform:scaleX(0.8333);">SLA</div>
<div class="t" style="left:690.20px;top:219.78px;font-size:9.36px;color:#2d2c5a;font-weight:400;letter-spacing:0.000px;transform:scaleX(0.8333);">Marketplace</div>
<div class="t" style="left:773.80px;top:219.78px;font-size:9.36px;color:#2d2c5a;font-weight:400;letter-spacing:0.000px;transform:scaleX(0.8333);">Source</div>
<div class="r" style="left:180.60px;top:236.00px;width:658.40px;height:27.10px;background:#fafbfe;border-bottom:1px solid #e8eaf1"></div>
<div class="r" style="left:180.60px;top:263.10px;width:658.40px;height:26.50px;background:#fff;border-bottom:1px solid #e8eaf1"></div>
<div class="r" style="left:180.60px;top:289.60px;width:658.40px;height:26.30px;background:#fafbfe;border-bottom:1px solid #e8eaf1"></div>
<div class="r" style="left:180.60px;top:315.90px;width:658.40px;height:26.80px;background:#fafbfe;border-bottom:1px solid #e8eaf1"></div>
<div class="r" style="left:180.60px;top:342.70px;width:658.40px;height:27.30px;background:#fafbfe;border-bottom:1px solid #e8eaf1"></div>
<div class="r" style="left:180.60px;top:370.00px;width:658.40px;height:26.10px;background:#fafbfe;border-bottom:1px solid #e8eaf1"></div>
<div class="r" style="left:180.60px;top:396.10px;width:658.40px;height:25.90px;background:#fafbfe;border-bottom:1px solid #e8eaf1"></div>
<div class="r" style="left:180.60px;top:235.00px;width:658.40px;height:1.00px;background:#e6e8f0"></div>
<div class="r" style="left:180.60px;top:288.20px;width:658.40px;height:2.40px;background:linear-gradient(180deg,#d5d8e0,#e6e8ee 60%,rgba(240,241,246,0))"></div>
<div class="r" style="left:189px;top:244.95px;width:9.7px;height:9.7px;border:1px solid #c9cadc;box-sizing:border-box;border-radius:1px;background:#fff"></div>
<div class="t" style="left:215.60px;top:245.43px;font-size:9.36px;color:#5b3cc4;font-weight:400;letter-spacing:0.000px;transform:scaleX(0.8333);">2409030633617</div>
<div class="t" style="left:315.40px;top:245.43px;font-size:9.36px;color:#2d2c5a;font-weight:400;letter-spacing:0.000px;transform:scaleX(0.8333);">cypcarrier573e</div>
<div class="t" style="left:419.50px;top:245.63px;font-size:9.12px;color:#2d2c5a;font-weight:400;letter-spacing:0.000px;transform:scaleX(0.8333);">Sep 3 2024, ...</div>
<div class="r" style="left:530.30px;top:247.45px;width:4.80px;height:4.80px;background:#3db54b;border-radius:50%"></div>
<div class="t" style="left:539.00px;top:245.63px;font-size:9.12px;color:#2d2c5a;font-weight:400;letter-spacing:0.120px;transform:scaleX(0.8333);-webkit-text-stroke:0.3px #2d2c5a">11</div>
<div class="r" style="left:616.10px;top:243.45px;width:36.70px;height:11.60px;background:#74829a;border-radius:1.5px"></div>
<svg class="r" style="left:619.50px;top:244.75px" width="8" height="9" viewBox="0 0 8 9"><rect x="2.3" y="0.8" width="3.4" height="7.4" rx="1" fill="none" stroke="#e8ebf0" stroke-width="0.8"/><circle cx="4" cy="4.5" r="2.1" fill="#74829a" stroke="#e8ebf0" stroke-width="0.8"/><circle cx="4" cy="4.5" r="0.5" fill="#e8ebf0"/></svg>
<div class="t" style="left:630.20px;top:245.84px;font-size:8.52px;color:#fff;font-weight:700;letter-spacing:0.000px;transform:scaleX(0.8333);">0 hrs</div>
<div class="t" style="left:686.50px;top:245.63px;font-size:9.12px;color:#8a93a8;font-weight:400;letter-spacing:0.000px;transform:scaleX(0.8333);">-</div>
<div class="r" style="left:769.50px;top:242.25px;width:14.40px;height:14.00px;background:#fbe3f1;border-radius:1px"></div>
<div class="t" style="left:774.20px;top:245.04px;font-size:8.40px;color:#e26bb0;font-weight:400;letter-spacing:0.000px;transform:scaleX(0.8333);">w</div>
<div class="t" style="left:788.60px;top:244.73px;font-size:9.12px;color:#2d2c5a;font-weight:400;letter-spacing:0.120px;transform:scaleX(0.8333);-webkit-text-stroke:0.3px #2d2c5a">web</div>
<div class="t" style="left:834.20px;top:245.43px;font-size:9.36px;color:#2d2c5a;font-weight:400;letter-spacing:0.000px;transform:scaleX(0.8333);">S</div>
<div class="r" style="left:189px;top:271.75px;width:9.7px;height:9.7px;border:1px solid #c9cadc;box-sizing:border-box;border-radius:1px;background:#fff"></div>
<div class="t" style="left:215.60px;top:272.23px;font-size:9.36px;color:#5b3cc4;font-weight:400;letter-spacing:0.000px;transform:scaleX(0.8333);">2403070480020</div>
<div class="t" style="left:315.40px;top:272.23px;font-size:9.36px;color:#2d2c5a;font-weight:400;letter-spacing:0.000px;transform:scaleX(0.8333);">Anchanto long name c...</div>
<div class="t" style="left:419.50px;top:272.43px;font-size:9.12px;color:#2d2c5a;font-weight:400;letter-spacing:0.000px;transform:scaleX(0.8333);">-</div>
<div class="r" style="left:530.30px;top:274.25px;width:4.80px;height:4.80px;background:#3db54b;border-radius:50%"></div>
<div class="t" style="left:539.00px;top:272.43px;font-size:9.12px;color:#2d2c5a;font-weight:400;letter-spacing:0.120px;transform:scaleX(0.8333);-webkit-text-stroke:0.3px #2d2c5a">2</div>
<div class="r" style="left:616.10px;top:270.25px;width:36.70px;height:11.60px;background:#74829a;border-radius:1.5px"></div>
<svg class="r" style="left:619.50px;top:271.55px" width="8" height="9" viewBox="0 0 8 9"><rect x="2.3" y="0.8" width="3.4" height="7.4" rx="1" fill="none" stroke="#e8ebf0" stroke-width="0.8"/><circle cx="4" cy="4.5" r="2.1" fill="#74829a" stroke="#e8ebf0" stroke-width="0.8"/><circle cx="4" cy="4.5" r="0.5" fill="#e8ebf0"/></svg>
<div class="t" style="left:630.20px;top:272.64px;font-size:8.52px;color:#fff;font-weight:700;letter-spacing:0.000px;transform:scaleX(0.8333);">0 hrs</div>
<div class="t" style="left:686.50px;top:272.43px;font-size:9.12px;color:#8a93a8;font-weight:400;letter-spacing:0.000px;transform:scaleX(0.8333);">-</div>
<div class="r" style="left:769.50px;top:269.05px;width:14.40px;height:14.00px;background:#fbe3f1;border-radius:1px"></div>
<div class="t" style="left:774.20px;top:271.84px;font-size:8.40px;color:#e26bb0;font-weight:400;letter-spacing:0.000px;transform:scaleX(0.8333);">w</div>
<div class="t" style="left:788.60px;top:271.53px;font-size:9.12px;color:#2d2c5a;font-weight:400;letter-spacing:0.120px;transform:scaleX(0.8333);-webkit-text-stroke:0.3px #2d2c5a">web</div>
<div class="t" style="left:834.20px;top:272.23px;font-size:9.36px;color:#2d2c5a;font-weight:400;letter-spacing:0.000px;transform:scaleX(0.8333);">S</div>
<div class="r" style="left:189px;top:298.15px;width:9.7px;height:9.7px;border:1px solid #c9cadc;box-sizing:border-box;border-radius:1px;background:#fff"></div>
<div class="t" style="left:215.60px;top:298.63px;font-size:9.36px;color:#5b3cc4;font-weight:400;letter-spacing:0.000px;transform:scaleX(0.8333);">2203301182827</div>
<div class="t" style="left:315.40px;top:298.63px;font-size:9.36px;color:#2d2c5a;font-weight:400;letter-spacing:0.000px;transform:scaleX(0.8333);">New Carrier</div>
<div class="t" style="left:419.50px;top:298.83px;font-size:9.12px;color:#2d2c5a;font-weight:400;letter-spacing:0.000px;transform:scaleX(0.8333);">Mar 31 202...</div>
<div class="r" style="left:530.30px;top:300.65px;width:4.80px;height:4.80px;background:#3db54b;border-radius:50%"></div>
<div class="t" style="left:539.00px;top:298.83px;font-size:9.12px;color:#2d2c5a;font-weight:400;letter-spacing:0.120px;transform:scaleX(0.8333);-webkit-text-stroke:0.3px #2d2c5a">1</div>
<div class="r" style="left:616.20px;top:296.95px;width:46.80px;height:11.00px;background:#fde1e3;border-radius:1.5px"></div>
<svg class="r" style="left:619.50px;top:297.95px" width="8" height="9" viewBox="0 0 8 9"><rect x="2.2" y="0.9" width="3.6" height="7.2" rx="1.6" fill="none" stroke="#e8333c" stroke-width="0.9"/><circle cx="4" cy="4.5" r="0.7" fill="#e8333c"/></svg>
<div class="t" style="left:630.80px;top:298.73px;font-size:8.88px;color:#e8333c;font-weight:400;letter-spacing:0.060px;transform:scaleX(0.8333);">27 Days</div>
<div class="t" style="left:686.50px;top:298.83px;font-size:9.12px;color:#2d2c5a;font-weight:400;letter-spacing:0.000px;transform:scaleX(0.8333);">-</div>
<div class="r" style="left:769.50px;top:295.45px;width:14.40px;height:14.00px;background:#fbe3f1;border-radius:1px"></div>
<div class="t" style="left:774.20px;top:298.24px;font-size:8.40px;color:#e26bb0;font-weight:400;letter-spacing:0.000px;transform:scaleX(0.8333);">w</div>
<div class="t" style="left:788.60px;top:297.93px;font-size:9.12px;color:#2d2c5a;font-weight:400;letter-spacing:0.120px;transform:scaleX(0.8333);-webkit-text-stroke:0.3px #2d2c5a">web</div>
<div class="t" style="left:834.20px;top:298.63px;font-size:9.36px;color:#2d2c5a;font-weight:400;letter-spacing:0.000px;transform:scaleX(0.8333);">S</div>
<div class="r" style="left:189px;top:324.70px;width:9.7px;height:9.7px;border:1px solid #c9cadc;box-sizing:border-box;border-radius:1px;background:#fff"></div>
<div class="t" style="left:215.60px;top:325.18px;font-size:9.36px;color:#5b3cc4;font-weight:400;letter-spacing:0.000px;transform:scaleX(0.8333);">2409251268201</div>
<div class="t" style="left:315.40px;top:325.18px;font-size:9.36px;color:#2d2c5a;font-weight:400;letter-spacing:0.000px;transform:scaleX(0.8333);">cypcarrier573e</div>
<div class="t" style="left:419.50px;top:325.38px;font-size:9.12px;color:#2d2c5a;font-weight:400;letter-spacing:0.000px;transform:scaleX(0.8333);">-</div>
<div class="r" style="left:530.30px;top:327.20px;width:4.80px;height:4.80px;background:#3db54b;border-radius:50%"></div>
<div class="t" style="left:539.00px;top:325.38px;font-size:9.12px;color:#2d2c5a;font-weight:400;letter-spacing:0.120px;transform:scaleX(0.8333);-webkit-text-stroke:0.3px #2d2c5a">1</div>
<div class="r" style="left:616.10px;top:323.20px;width:36.70px;height:11.60px;background:#74829a;border-radius:1.5px"></div>
<svg class="r" style="left:619.50px;top:324.50px" width="8" height="9" viewBox="0 0 8 9"><rect x="2.3" y="0.8" width="3.4" height="7.4" rx="1" fill="none" stroke="#e8ebf0" stroke-width="0.8"/><circle cx="4" cy="4.5" r="2.1" fill="#74829a" stroke="#e8ebf0" stroke-width="0.8"/><circle cx="4" cy="4.5" r="0.5" fill="#e8ebf0"/></svg>
<div class="t" style="left:630.20px;top:325.59px;font-size:8.52px;color:#fff;font-weight:700;letter-spacing:0.000px;transform:scaleX(0.8333);">0 hrs</div>
<div class="t" style="left:686.50px;top:325.38px;font-size:9.12px;color:#2d2c5a;font-weight:400;letter-spacing:0.000px;transform:scaleX(0.8333);">-</div>
<div class="r" style="left:769.50px;top:322.00px;width:14.40px;height:14.00px;background:#fbe3f1;border-radius:1px"></div>
<div class="t" style="left:774.20px;top:324.79px;font-size:8.40px;color:#e26bb0;font-weight:400;letter-spacing:0.000px;transform:scaleX(0.8333);">w</div>
<div class="t" style="left:788.60px;top:324.48px;font-size:9.12px;color:#2d2c5a;font-weight:400;letter-spacing:0.120px;transform:scaleX(0.8333);-webkit-text-stroke:0.3px #2d2c5a">web</div>
<div class="t" style="left:834.20px;top:325.18px;font-size:9.36px;color:#2d2c5a;font-weight:400;letter-spacing:0.000px;transform:scaleX(0.8333);">S</div>
<div class="r" style="left:189px;top:351.75px;width:9.7px;height:9.7px;border:1px solid #c9cadc;box-sizing:border-box;border-radius:1px;background:#fff"></div>
<div class="t" style="left:215.60px;top:352.23px;font-size:9.36px;color:#5b3cc4;font-weight:400;letter-spacing:0.000px;transform:scaleX(0.8333);">240926049184</div>
<div class="t" style="left:315.40px;top:352.23px;font-size:9.36px;color:#2d2c5a;font-weight:400;letter-spacing:0.000px;transform:scaleX(0.8333);">cypcarrier573e</div>
<div class="t" style="left:419.50px;top:352.43px;font-size:9.12px;color:#2d2c5a;font-weight:400;letter-spacing:0.000px;transform:scaleX(0.8333);">Sep 26 2024...</div>
<div class="r" style="left:530.30px;top:354.25px;width:4.80px;height:4.80px;background:#3db54b;border-radius:50%"></div>
<div class="t" style="left:539.00px;top:352.43px;font-size:9.12px;color:#2d2c5a;font-weight:400;letter-spacing:0.120px;transform:scaleX(0.8333);-webkit-text-stroke:0.3px #2d2c5a">1</div>
<div class="r" style="left:616.10px;top:350.25px;width:36.70px;height:11.60px;background:#74829a;border-radius:1.5px"></div>
<svg class="r" style="left:619.50px;top:351.55px" width="8" height="9" viewBox="0 0 8 9"><rect x="2.3" y="0.8" width="3.4" height="7.4" rx="1" fill="none" stroke="#e8ebf0" stroke-width="0.8"/><circle cx="4" cy="4.5" r="2.1" fill="#74829a" stroke="#e8ebf0" stroke-width="0.8"/><circle cx="4" cy="4.5" r="0.5" fill="#e8ebf0"/></svg>
<div class="t" style="left:630.20px;top:352.64px;font-size:8.52px;color:#fff;font-weight:700;letter-spacing:0.000px;transform:scaleX(0.8333);">0 hrs</div>
<div class="t" style="left:686.50px;top:352.43px;font-size:9.12px;color:#2d2c5a;font-weight:400;letter-spacing:0.000px;transform:scaleX(0.8333);">-</div>
<div class="r" style="left:769.50px;top:349.05px;width:14.40px;height:14.00px;background:#fbe3f1;border-radius:1px"></div>
<div class="t" style="left:774.20px;top:351.84px;font-size:8.40px;color:#e26bb0;font-weight:400;letter-spacing:0.000px;transform:scaleX(0.8333);">w</div>
<div class="t" style="left:788.60px;top:351.53px;font-size:9.12px;color:#2d2c5a;font-weight:400;letter-spacing:0.120px;transform:scaleX(0.8333);-webkit-text-stroke:0.3px #2d2c5a">web</div>
<div class="t" style="left:834.20px;top:352.23px;font-size:9.36px;color:#2d2c5a;font-weight:400;letter-spacing:0.000px;transform:scaleX(0.8333);">S</div>
<div class="r" style="left:189px;top:378.45px;width:9.7px;height:9.7px;border:1px solid #c9cadc;box-sizing:border-box;border-radius:1px;background:#fff"></div>
<div class="t" style="left:215.60px;top:378.93px;font-size:9.36px;color:#5b3cc4;font-weight:400;letter-spacing:0.000px;transform:scaleX(0.8333);">2305100577553</div>
<div class="t" style="left:315.40px;top:378.93px;font-size:9.36px;color:#2d2c5a;font-weight:400;letter-spacing:0.000px;transform:scaleX(0.8333);">Asendia&amp;Carrier1</div>
<div class="t" style="left:419.50px;top:379.13px;font-size:9.12px;color:#2d2c5a;font-weight:400;letter-spacing:0.000px;transform:scaleX(0.8333);">May 10 202...</div>
<div class="r" style="left:530.30px;top:380.95px;width:4.80px;height:4.80px;background:#3db54b;border-radius:50%"></div>
<div class="t" style="left:539.00px;top:379.13px;font-size:9.12px;color:#2d2c5a;font-weight:400;letter-spacing:0.120px;transform:scaleX(0.8333);-webkit-text-stroke:0.3px #2d2c5a">1</div>
<div class="r" style="left:616.10px;top:376.95px;width:36.70px;height:11.60px;background:#74829a;border-radius:1.5px"></div>
<svg class="r" style="left:619.50px;top:378.25px" width="8" height="9" viewBox="0 0 8 9"><rect x="2.3" y="0.8" width="3.4" height="7.4" rx="1" fill="none" stroke="#e8ebf0" stroke-width="0.8"/><circle cx="4" cy="4.5" r="2.1" fill="#74829a" stroke="#e8ebf0" stroke-width="0.8"/><circle cx="4" cy="4.5" r="0.5" fill="#e8ebf0"/></svg>
<div class="t" style="left:630.20px;top:379.34px;font-size:8.52px;color:#fff;font-weight:700;letter-spacing:0.000px;transform:scaleX(0.8333);">0 hrs</div>
<div class="t" style="left:686.50px;top:379.13px;font-size:9.12px;color:#2d2c5a;font-weight:400;letter-spacing:0.000px;transform:scaleX(0.8333);">-</div>
<div class="r" style="left:769.50px;top:375.75px;width:14.40px;height:14.00px;background:#fbe3f1;border-radius:1px"></div>
<div class="t" style="left:774.20px;top:378.54px;font-size:8.40px;color:#e26bb0;font-weight:400;letter-spacing:0.000px;transform:scaleX(0.8333);">w</div>
<div class="t" style="left:788.60px;top:378.23px;font-size:9.12px;color:#2d2c5a;font-weight:400;letter-spacing:0.120px;transform:scaleX(0.8333);-webkit-text-stroke:0.3px #2d2c5a">web</div>
<div class="t" style="left:834.20px;top:378.93px;font-size:9.36px;color:#2d2c5a;font-weight:400;letter-spacing:0.000px;transform:scaleX(0.8333);">S</div>
<div class="r" style="left:189px;top:404.45px;width:9.7px;height:9.7px;border:1px solid #c9cadc;box-sizing:border-box;border-radius:1px;background:#fff"></div>
<div class="t" style="left:215.60px;top:404.93px;font-size:9.36px;color:#5b3cc4;font-weight:400;letter-spacing:0.000px;transform:scaleX(0.8333);">2403071142767</div>
<div class="t" style="left:315.40px;top:404.93px;font-size:9.36px;color:#2d2c5a;font-weight:400;letter-spacing:0.000px;transform:scaleX(0.8333);">New Carrier</div>
<div class="t" style="left:419.50px;top:405.13px;font-size:9.12px;color:#2d2c5a;font-weight:400;letter-spacing:0.000px;transform:scaleX(0.8333);">-</div>
<div class="r" style="left:530.30px;top:406.95px;width:4.80px;height:4.80px;background:#3db54b;border-radius:50%"></div>
<div class="t" style="left:539.00px;top:405.13px;font-size:9.12px;color:#2d2c5a;font-weight:400;letter-spacing:0.120px;transform:scaleX(0.8333);-webkit-text-stroke:0.3px #2d2c5a">2</div>
<div class="r" style="left:616.10px;top:402.95px;width:36.70px;height:11.60px;background:#74829a;border-radius:1.5px"></div>
<svg class="r" style="left:619.50px;top:404.25px" width="8" height="9" viewBox="0 0 8 9"><rect x="2.3" y="0.8" width="3.4" height="7.4" rx="1" fill="none" stroke="#e8ebf0" stroke-width="0.8"/><circle cx="4" cy="4.5" r="2.1" fill="#74829a" stroke="#e8ebf0" stroke-width="0.8"/><circle cx="4" cy="4.5" r="0.5" fill="#e8ebf0"/></svg>
<div class="t" style="left:630.20px;top:405.34px;font-size:8.52px;color:#fff;font-weight:700;letter-spacing:0.000px;transform:scaleX(0.8333);">0 hrs</div>
<div class="t" style="left:686.50px;top:405.13px;font-size:9.12px;color:#2d2c5a;font-weight:400;letter-spacing:0.000px;transform:scaleX(0.8333);">-</div>
<div class="r" style="left:769.50px;top:401.75px;width:14.40px;height:14.00px;background:#fbe3f1;border-radius:1px"></div>
<div class="t" style="left:774.20px;top:404.54px;font-size:8.40px;color:#e26bb0;font-weight:400;letter-spacing:0.000px;transform:scaleX(0.8333);">w</div>
<div class="t" style="left:788.60px;top:404.23px;font-size:9.12px;color:#2d2c5a;font-weight:400;letter-spacing:0.120px;transform:scaleX(0.8333);-webkit-text-stroke:0.3px #2d2c5a">web</div>
<div class="t" style="left:834.20px;top:404.93px;font-size:9.36px;color:#2d2c5a;font-weight:400;letter-spacing:0.000px;transform:scaleX(0.8333);">S</div>
<div class="r" style="left:839.00px;top:6.00px;width:10.00px;height:444.00px;background:#fff"></div>
<div class="r" style="left:834.20px;top:212.00px;width:3.50px;height:84.40px;background:#c6c6cc;border-radius:2px"></div>
<div class="r" style="left:180.60px;top:421.80px;width:658.40px;height:4.20px;background:#e7e7f3"></div>
<div class="r" style="left:180.60px;top:421.80px;width:483.40px;height:4.20px;background:#c3c3c9;border-radius:2px"></div>
<div class="r" style="left:180.60px;top:426.00px;width:658.40px;height:24.00px;background:#fafbfe"></div>
<div class="t" style="left:189.80px;top:436.08px;font-size:9.12px;color:#2d2c5a;font-weight:400;letter-spacing:0.000px;transform:scaleX(0.8333);">Item Per Page</div>
<div class="r" style="left:241.10px;top:434.40px;width:44.10px;height:14.30px;background:#fff;border:1px solid #dedcf2;border-radius:2px"></div>
<div class="t" style="left:247.60px;top:437.88px;font-size:9.12px;color:#333;font-weight:400;letter-spacing:0.000px;transform:scaleX(0.8333);">100</div>
<svg class="r" style="left:272.30px;top:438.20px" width="8" height="8" viewBox="0 0 8 8"><path d="M2.3 3.15 L4 4.85 L5.7 3.15" fill="none" stroke="#333" stroke-width="0.8" stroke-linecap="round" stroke-linejoin="round"/></svg>
<div class="t" style="left:298.80px;top:436.08px;font-size:9.12px;color:#2d2c5a;font-weight:400;letter-spacing:0.000px;transform:scaleX(0.8333);">Go To Page No.</div>
<div class="r" style="left:355.00px;top:434.40px;width:46.40px;height:14.20px;background:#fff;border:1px solid #dedcf2;border-radius:2px"></div>
<div class="r" style="left:387.40px;top:434.90px;width:13.50px;height:13.20px;background:#eef0f3;border-left:1px solid #e6e6f0"></div>
<svg class="r" style="left:390.00px;top:437.50px" width="9" height="9" viewBox="0 0 9 9"><path d="M1.3 4.5 H7.6 M5.1 2 L7.6 4.5 L5.1 7" fill="none" stroke="#333" stroke-width="1"/></svg>
<svg class="r" style="left:633.80px;top:438.70px" width="6" height="8" viewBox="0 0 6 8"><path d="M4.4 1.6 L1.6 4 L4.4 6.4" fill="none" stroke="#a6a2e0" stroke-width="0.9" stroke-linecap="round" stroke-linejoin="round"/></svg>
<svg class="r" style="left:636.60px;top:438.70px" width="6" height="8" viewBox="0 0 6 8"><path d="M4.4 1.6 L1.6 4 L4.4 6.4" fill="none" stroke="#a6a2e0" stroke-width="0.9" stroke-linecap="round" stroke-linejoin="round"/></svg>
<div class="t" style="left:644.30px;top:438.38px;font-size:9.12px;color:#a6a2e0;font-weight:400;letter-spacing:0.000px;transform:scaleX(0.8333);">First</div>
<svg class="r" style="left:667.20px;top:438.70px" width="6" height="8" viewBox="0 0 6 8"><path d="M4.4 1.6 L1.6 4 L4.4 6.4" fill="none" stroke="#a6a2e0" stroke-width="0.9" stroke-linecap="round" stroke-linejoin="round"/></svg>
<div class="t" style="left:675.30px;top:438.38px;font-size:9.12px;color:#a6a2e0;font-weight:400;letter-spacing:0.000px;transform:scaleX(0.8333);">Prev</div>
<div class="t" style="left:725.90px;top:438.38px;font-size:9.12px;color:#a6a2e0;font-weight:400;letter-spacing:0.000px;transform:scaleX(0.8333);">Next</div>
<svg class="r" style="left:744.80px;top:438.70px" width="6" height="8" viewBox="0 0 6 8"><path d="M1.6 1.6 L4.4 4 L1.6 6.4" fill="none" stroke="#a6a2e0" stroke-width="0.9" stroke-linecap="round" stroke-linejoin="round"/></svg>
<div class="t" style="left:758.60px;top:438.38px;font-size:9.12px;color:#a6a2e0;font-weight:400;letter-spacing:0.000px;transform:scaleX(0.8333);">Last</div>
<svg class="r" style="left:774.20px;top:438.70px" width="6" height="8" viewBox="0 0 6 8"><path d="M1.6 1.6 L4.4 4 L1.6 6.4" fill="none" stroke="#a6a2e0" stroke-width="0.9" stroke-linecap="round" stroke-linejoin="round"/></svg>
<svg class="r" style="left:777.00px;top:438.70px" width="6" height="8" viewBox="0 0 6 8"><path d="M1.6 1.6 L4.4 4 L1.6 6.4" fill="none" stroke="#a6a2e0" stroke-width="0.9" stroke-linecap="round" stroke-linejoin="round"/></svg>
<div class="r" style="left:697.60px;top:432.40px;width:18.40px;height:18.40px;background:#e3e5eb;border-radius:50%"></div>
<div class="t" style="left:704.60px;top:437.89px;font-size:8.64px;color:#5b3cc4;font-weight:400;letter-spacing:0.000px;transform:scaleX(0.8333);">1</div>
<div class="r" style="left:0.00px;top:450.00px;width:854.00px;height:6.00px;background:#000"></div>
<div class="r" style="left:849.00px;top:0.00px;width:5.00px;height:456.00px;background:#000"></div>
</body></html>
